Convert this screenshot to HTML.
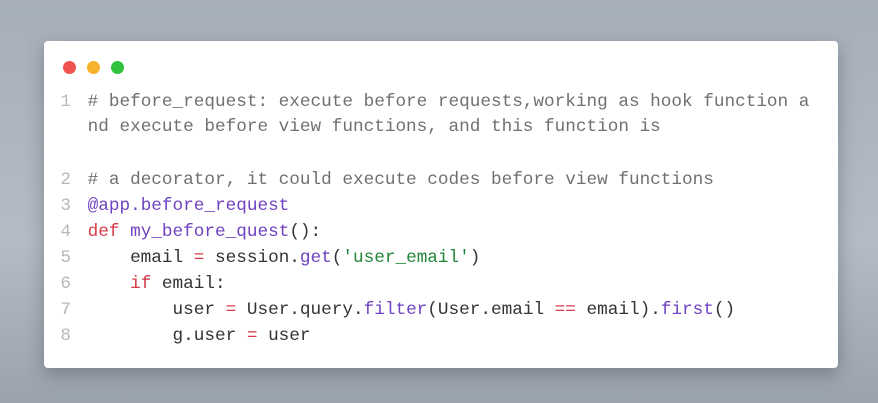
<!DOCTYPE html>
<html><head><style>
html,body{margin:0;padding:0}
body{width:878px;height:403px;background:linear-gradient(180deg,#a6afb9 0%,#b3bbc4 60%,#9aa3ad 100%);position:relative;overflow:hidden;font-family:"Liberation Mono",monospace}
.card{position:absolute;left:44px;top:41px;width:794px;height:327px;background:#fff;border-radius:4px;box-shadow:0 6px 18px rgba(40,50,60,.35)}
.dot{position:absolute;top:20px;width:13px;height:13px;border-radius:50%}
.l{position:absolute;left:0;font-size:17.7px;line-height:26px;white-space:pre;color:#333}
.n{display:inline-block;width:27px;padding-right:6px;text-align:right;color:#b8b8b8}
.c{color:#707070}.k{color:#d73a49}.p{color:#6f42c1}.s{color:#22863a}
</style></head><body>
<div class="card">
<div class="dot" style="left:19px;background:#f0524f"></div>
<div class="dot" style="left:43px;background:#f6b22a"></div>
<div class="dot" style="left:67px;background:#2ec23d"></div>
<div class="l" style="top:48px"><span class="n">1</span> <span class="c"># before_request: execute before requests,working as hook function a</span></div>
<div class="l" style="top:73px"><span class="n"></span> <span class="c">nd execute before view functions, and this function is</span></div>
<div class="l" style="top:126px"><span class="n">2</span> <span class="c"># a decorator, it could execute codes before view functions</span></div>
<div class="l" style="top:152px"><span class="n">3</span> <span class="p">@app.before_request</span></div>
<div class="l" style="top:178px"><span class="n">4</span> <span class="k">def</span> <span class="p">my_before_quest</span>():</div>
<div class="l" style="top:204px"><span class="n">5</span>     email <span class="k">=</span> session.<span class="p">get</span>(<span class="s">'user_email'</span>)</div>
<div class="l" style="top:230px"><span class="n">6</span>     <span class="k">if</span> email:</div>
<div class="l" style="top:256px"><span class="n">7</span>         user <span class="k">=</span> User.query.<span class="p">filter</span>(User.email <span class="k">==</span> email).<span class="p">first</span>()</div>
<div class="l" style="top:282px"><span class="n">8</span>         g.user <span class="k">=</span> user</div>
</div>
</body></html>
